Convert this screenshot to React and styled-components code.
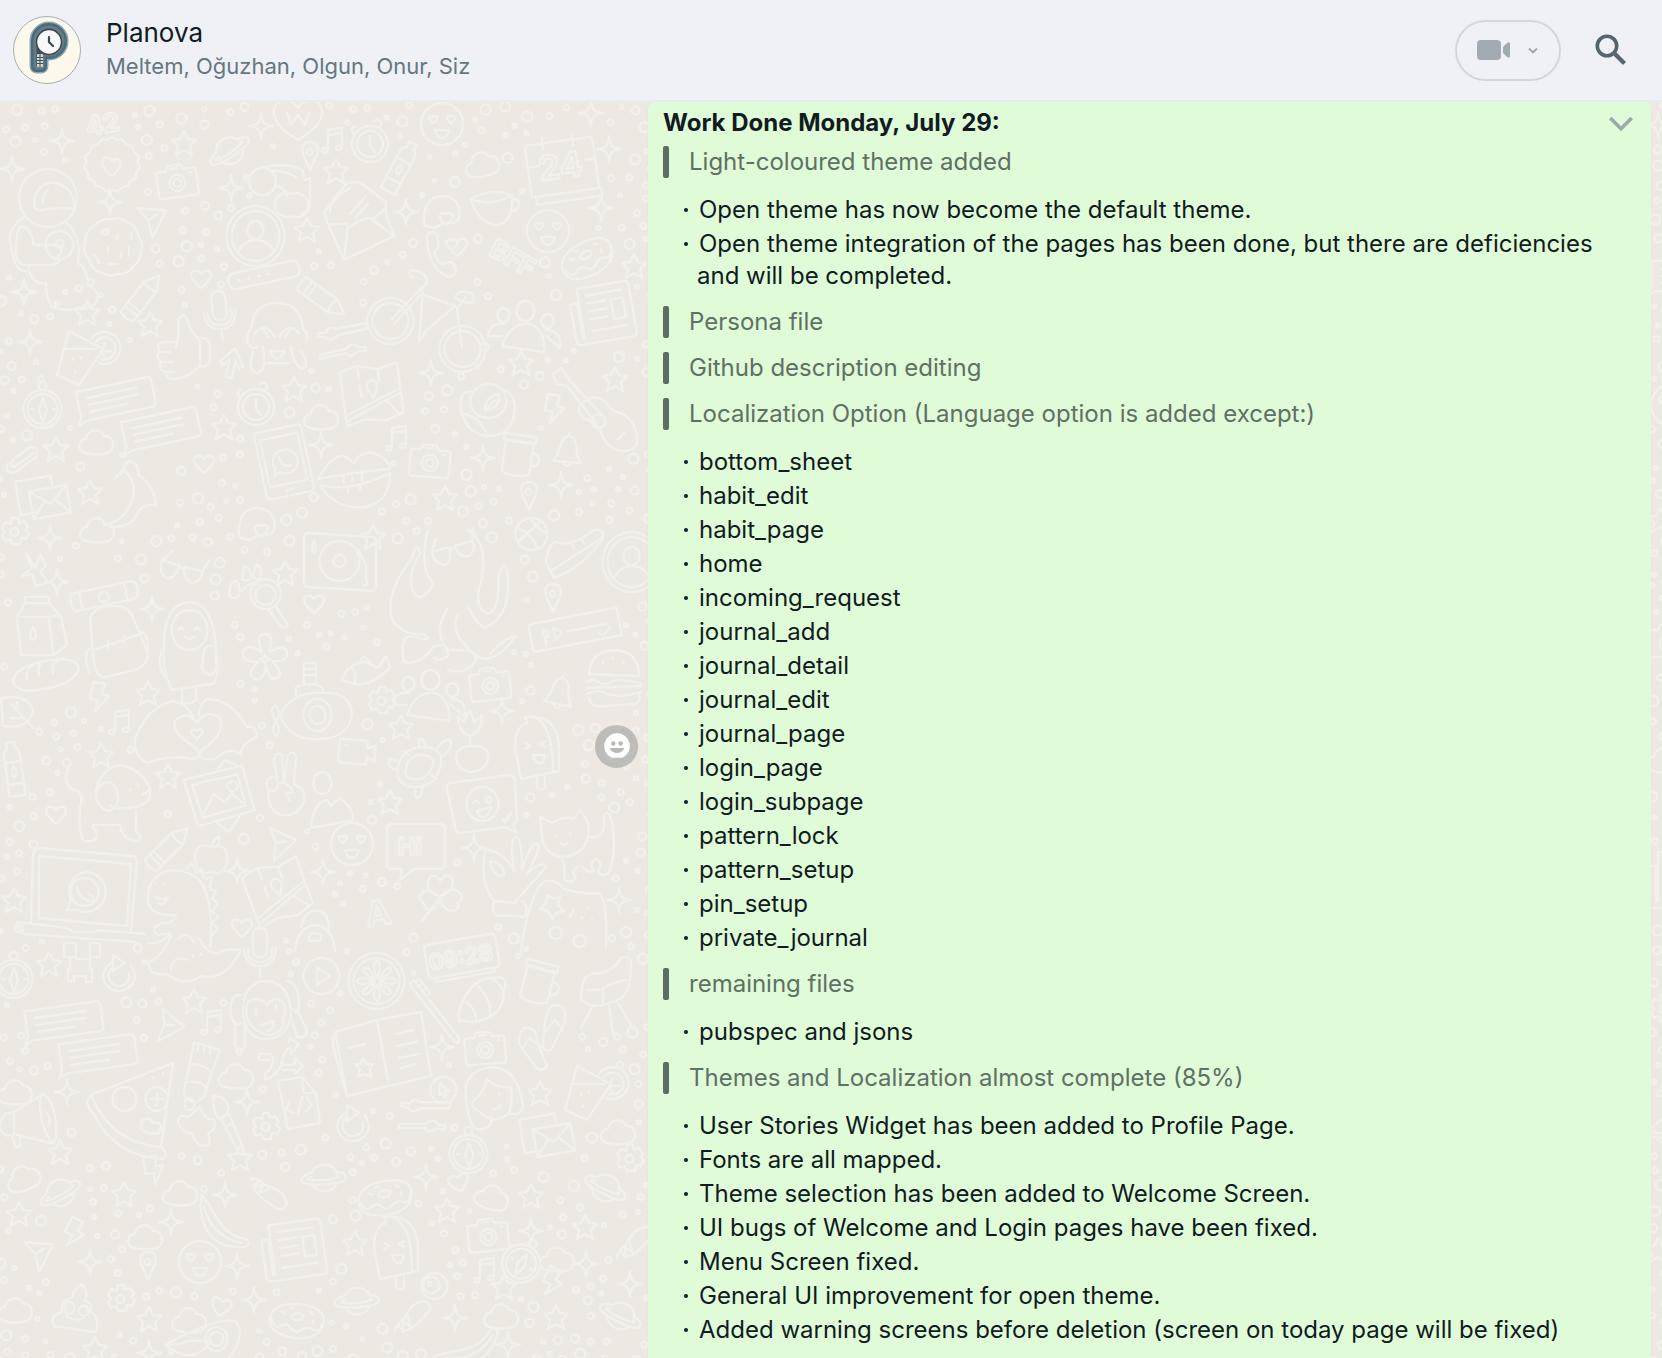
import React from "react";
import styled, { createGlobalStyle } from "styled-components";

const GlobalStyle = createGlobalStyle`
  *, *::before, *::after { box-sizing: border-box; }
  body { margin: 0; font-family: Inter, "Noto Sans", sans-serif; color: #111b21; }
  h1, h2, p, ul, blockquote { margin: 0; padding: 0; }
  button { border: 0; padding: 0; background: none; font: inherit; color: inherit; cursor: pointer; }
`;

const Page = styled.div`
  display: flex;
  flex-direction: column;
  height: 100vh;
  background: #ede8e1;
`;

const Header = styled.header`
  display: flex;
  align-items: center;
  height: 102px;
  flex: none;
  padding: 0 27px 0 13px;
  background: #eff1f6;
  border-bottom: 2px solid #e8ecf0;
`;

const Identity = styled.div`
  display: flex;
  flex-direction: column;
  flex: 1;
  min-width: 0;
  margin-left: 25px;
  padding-bottom: 2px;
`;

const ChatName = styled.h1`
  font-size: 26px;
  line-height: 34px;
  font-weight: 400;
`;

const Members = styled.p`
  font-size: 22px;
  line-height: 32px;
  color: #667781;
  white-space: nowrap;
  overflow: hidden;
  text-overflow: ellipsis;
`;

const CallButton = styled.button`
  display: flex;
  align-items: center;
  justify-content: center;
  width: 106px;
  height: 61px;
  border: 2px solid #d1d7db;
  border-radius: 31px;
`;

const IconButton = styled.button`
  display: flex;
  align-items: center;
  justify-content: center;
  flex: none;
  width: ${(p) => p.$size}px;
  height: ${(p) => p.$size}px;
`;

const SearchButton = styled(IconButton)`
  margin-left: 26px;
`;

const Chat = styled.main`
  flex: 1;
  min-height: 0;
  display: grid;
  grid-template: minmax(0, 1fr) / minmax(0, 1fr);
`;

const Wallpaper = styled.svg`
  grid-area: 1 / 1;
  width: 100%;
  height: 100%;
  overflow: hidden;
  fill: none;
  stroke: #f3efea;
  stroke-width: 2.4;
  stroke-linecap: round;
  stroke-linejoin: round;
`;

const Scroller = styled.div`
  grid-area: 1 / 1;
  overflow-y: auto;
  scrollbar-width: none;
`;

const MessageRow = styled.div`
  display: flex;
  align-items: center;
  justify-content: flex-end;
  gap: 10px;
  padding: 0 11px 24px;
`;

const ReactButton = styled(IconButton)`
  border-radius: 50%;
  background: rgba(134, 138, 138, 0.47);
`;

const Bubble = styled.article`
  flex: 0 1 1003px;
  min-width: 0;
  display: flex;
  align-items: flex-start;
  padding: 5px 16px 44px 15px;
  border-radius: 6px;
  background: #dffbd8;
  box-shadow: 0 1px 1px rgba(11, 20, 26, 0.13);
`;

const Body = styled.div`
  flex: 1;
  min-width: 0;
  display: flex;
  flex-direction: column;
  gap: 14px;
  font-size: 24px;
  line-height: 32px;
`;

const Opening = styled.div`
  display: flex;
  flex-direction: column;
  gap: 7px;
`;

const Title = styled.h2`
  font-size: 24px;
  line-height: 32px;
  font-weight: 700;
`;

const Quote = styled.blockquote`
  display: flex;
  gap: 20px;
  color: #5f7064;

  &::before {
    content: "";
    width: 6px;
    border-radius: 2px;
    background: #5c6d61;
  }
`;

const List = styled.ul`
  list-style: none;
`;

const Item = styled.li`
  display: flex;
  margin-top: 2px;
  padding-left: 21px;

  &::before {
    content: "";
    flex: none;
    width: 4px;
    height: 4px;
    margin: 14px 9px 0 0;
    border-radius: 50%;
    background: #111b21;
  }
`;

const ItemText = styled.span`
  text-indent: 2px;
`;

const MenuButton = styled(IconButton)`
  margin-top: 3px;
`;

const sections = [
  {
    quote: "Light-coloured theme added",
    items: [
      "Open theme has now become the default theme.",
      "Open theme integration of the pages has been done, but there are deficiencies and will be completed.",
    ],
  },
  { quote: "Persona file", items: [] },
  { quote: "Github description editing", items: [] },
  {
    quote: "Localization Option (Language option is added except:)",
    items: [
      "bottom_sheet", "habit_edit", "habit_page", "home", "incoming_request",
      "journal_add", "journal_detail", "journal_edit", "journal_page",
      "login_page", "login_subpage", "pattern_lock", "pattern_setup",
      "pin_setup", "private_journal",
    ],
  },
  { quote: "remaining files", items: ["pubspec and jsons"] },
  {
    quote: "Themes and Localization almost complete (85%)",
    items: [
      "User Stories Widget has been added to Profile Page.",
      "Fonts are all mapped.",
      "Theme selection has been added to Welcome Screen.",
      "UI bugs of Welcome and Login pages have been fixed.",
      "Menu Screen fixed.",
      "General UI improvement for open theme.",
      "Added warning screens before deletion (screen on today page will be fixed)",
    ],
  },
];

/* Doodles of the wallpaper: each is drawn round its own origin; r is the room it takes. */
const HEART = "M0 9C-6 4-10 0-10-4C-10-9-3-10 0-5C3-10 10-9 10-4C10 0 6 4 0 9Z";
const STAR = "M0-12L4-4L12-3L6 3L8 12L0 7L-8 12L-6 3L-12-3L-4-4Z";
const bubbleLines = "M-38-14H34Q38-14 38-10V12Q38 16 34 16H-34L-42 20L-38 12ZM-28-6H22M-28 1H22M-28 8H10";

const doodles = {
  star: { r: 14, d: STAR },
  sparkle: { r: 14, d: "M0-13C1-3 3-1 12 0C3 1 1 3 0 13C-1 3-3 1-12 0C-3-1-1-3 0-13Z" },
  heart: { r: 13, d: HEART },
  cloud: { r: 18, d: "M-11 11C-20 9-18-3-10-3C-9-13 5-15 8-6C18-7 20 7 12 11Q0 14-11 11Z" },
  bigHeart: { r: 28, d: "M0 20C-16 10-24 2-24-8C-24-22-6-23 0-12C6-23 24-22 24-8C24 2 16 10 0 20ZM-11-7L-7 5L0-5L7 5L11-7" },
  face: { r: 24, d: "M0-21A21 21 0 1 1 0 21A21 21 0 1 1 0-21M-9-1C-16-6-12-10-9-7C-6-10-2-6-9-1M9-1C2-6 6-10 9-7C12-10 16-6 9-1M-7 6H7Q5 14 0 14Q-5 14-7 6" },
  planet: { r: 24, d: "M-12-5A14 14 0 0 1 13-4M-12 7A14 14 0 0 0 13 6M-13-4Q-24-1-22 4Q-18 9 2 7Q22 6 22 0Q21-5 13-5M-12 0Q-20 2-14 3Q0 4 12 1Q18-1 13-1" },
  watch: { r: 22, d: "M0-17A18 18 0 1 1 0 19A18 18 0 1 1 0-17M0-12A13 13 0 1 1 0 14A13 13 0 1 1 0-12M0-7V3L5 9M4-22A4 4 0 1 1 4-17M-15-16Q-20-17-17-10" },
  calendar: { r: 42, d: "M-30-26H30Q34-26 34-22V26H-34V-22Q-34-26-30-26M-30 26V34H36V26M-16-32V-20M14-32V-20M-34-4H-22M24-4H34" },
  badge: { r: 32, d: "M0-28Q5-24 10-26Q13-20 20-19Q20-13 27-9Q24-3 28 2Q23 6 24 13Q18 15 16 21Q9 21 6 27Q0 23-6 27Q-9 21-16 21Q-18 15-24 13Q-23 6-28 2Q-24-3-27-9Q-20-13-20-19Q-13-20-10-26Q-5-24 0-28M0 11C-14 1-10-10-4-7L0-4C5-10 16-4 0 11" },
  camera: { r: 24, d: "M-18-10H-10L-8-15H5L8-10H18Q20-10 20-7V14Q20 17 17 17H-17Q-20 17-20 14V-7Q-20-10-18-10M0-5A8 8 0 1 1 0 11A8 8 0 1 1 0-5M0-1A4 4 0 1 1 0 7A4 4 0 1 1 0-1M-5-12H2M13-6H15" },
  astronaut: { r: 62, d: "M0-58A29 29 0 1 1 0 0A29 29 0 1 1 0-58M8-44C-6-46-14-36-14-22Q-13-16-6-17Q8-20 26-18Q28-38 8-44M-5-24Q-5-34 0-37M-24-10Q-38 0-38 10Q-36 36-28 43Q-16 46-20 40M-28 0Q-18-2-14 18H12Q16 24 10 30Q14 36 4 38H-22Q-32 38-32 24Q-32 4-28 0M18-5Q34 10 30 36Q40 42 40 58Q56 66 46 78Q38 84 32 80Q22 86 4 80Q-2 72-2 56Q-16 58-20 40M12 4A14 14 0 1 1 11 4M12 13A4 4 0 1 1 11 13" },
  cookie: { r: 32, d: "M0-28Q6-31 12-26Q24-22 26-10Q31-4 28 4Q28 14 20 20Q14 28 4 27Q-4 31-10 26Q-22 24-24 12Q-31 6-28-4Q-28-16-18-22Q-10-30 0-28M-12-14Q-6-20-4-16Q-6-10-12-14M4-12V-7M-5 0V5M8 5V10M-20 8Q-16 10-14 16M16 0V9M-4 17H4M18-14Q20-10 18-8" },
  shades: { r: 32, d: "M-26-20A13 13 0 1 1-25 7A13 13 0 1 1-26-20M4 6A12 12 0 1 1 3 28A12 12 0 1 1 4 6M-13-2Q-4-2-1 8M-28-20Q0-26 14-18L16-12M-20-18Q4-16 8-10M16-8L22-10V16Q22 24 14 26" },
  openLetter: { r: 46, d: "M-34-10L-12-38Q-2-42 4-38L28-20V-8L36 14L-14 38L-30 2ZM-30 2H-10L-14 38M36 14L12-4Q4-4-10 6M-28-10Q-28-22-8-34M28-14L14-2M-8-8L8-26M-3-4L10-18" },
  bottle: { r: 24, d: "M-8-14Q-8-20-4-22V-28H4V-22Q8-20 8-14V26H-8ZM-8-8H8M-8 14H8M0-4Q5 4 0 7Q-5 4 0-4" },
  cup: { r: 28, d: "M-22-10Q0-20 20-10Q20 14 6 18Q-14 20-22-10Q-2 0 20-10M20-6Q28-6 26 1Q22 8 18 4" },
  locket: { r: 22, d: "M-18 12Q-20-16 0-17Q20-16 17 6Q12 12 0 10Q-6 18-18 12M4 12C-6 5-2-2 4 1C9-3 16 4 4 12" },
  profile: { r: 32, d: "M0-30A29 30 0 1 1-1-30M0-25A24 25 0 1 1-1-25M0-15A8 9 0 1 1-1-15M-18 16Q-12 4 0 4Q12 4 18 16" },
  handset: { r: 24, d: "M-14-20Q-8-26-4-20L-2-8Q-8-4-6 0Q0 12 4 8Q12 4 15 14Q15 21 8 22Q-14 14-14-20M10-6C2-12 6-17 10-14C16-18 20-10 10-6" },
  donut: { r: 28, d: "M-27 4Q-28-14 0-16Q27-16 27-2Q26 16 2 18Q-25 18-27 4M-26 2Q-20 14-14 7Q-8 4-4 10Q2 14 7 8Q14 4 18 8Q25 8 26 0M-6-4Q0-9 6-5Q6 0 0 0Q-6 1-6-4M-16-6L-12-4M12-10L15-8M-8-11H-5M16-2V1" },
  password: { r: 36, d: "M-30-8H30Q36-8 36 0Q36 8 30 8H-30Q-36 8-36 0Q-36-8-30-8M-26 0H-25M-16 0H-15M-6 0H-5M4 0H5" },
  crayon: { r: 28, d: "M-26-8H12L26 0L12 8H-26Q-30 0-26-8M-19-8V8M-14-8V8M12-8Q8 0 12 8" },
  mic: { r: 24, d: "M0-24Q7-24 7-16V-2Q7 5 0 5Q-7 5-7-2V-16Q-7-24 0-24M-12-4Q-13 10 0 10Q13 10 12-4M-16-4Q-15 14 0 14Q15 14 16-4M0 14V25" },
  monkey: { r: 40, d: "M-26-8Q-24-34 0-34Q24-34 26-8M-26-8Q-30-4-30 4Q-26 14-20 10M26-8Q32-4 30 4M-22-4Q-12-16-2 0M22-4Q12-16 2 0M-14-8L-8 0M14-8L8 0M-24 14Q-30 34-20 36Q-10 34-14 10M24 14Q34 30 24 32Q16 26 14 10M-7 14H8Q4 22 0 22Q-4 22-7 14M-10 26H12" },
  bike: { r: 58, d: "M-36-22A23 23 0 1 1-37-22M-36-17A18 18 0 1 1-37-17M36 6A23 23 0 1 1 35 6M36 11A18 18 0 1 1 35 11M-36 0L-4-34M-33 4L-6-26L28-14L0 10L-8 22L-4-28M35 28L30-12L38-22M28-22Q30-30 40-28Q48-28 46-18Q36-16 28-22M-14-42Q-20-46-16-50Q0-48 0-38L-6-30" },
  people: { r: 36, d: "M0-25A9 10 0 1 1-1-25M-22-18A6 7 0 1 1-23-18M22-12A6 7 0 1 1 21-12M-24 20Q-16-4 4-2Q20 4 18 26ZM-24 10H-38Q-36-4-22-2M20 10L34 22Q36 4 20 4" },
  paper: { r: 40, d: "M-22-28H26Q30-28 30-24V24Q30 28 26 28H-26Q-31 28-31 23V-14H-24V22M-22-28V22M-14-20H22M-14-12H4M-14-4H4M-14 4H4M10-12H22V8H10ZM-14 16H22" },
  thumb: { r: 36, d: "M-4 0Q0-18-2-28Q4-38 8-26Q10-16 20-8V18Q10 28 0 30Q-14 34-14 24Q-24 20-18 14Q-26 10-20 4Q-26-6-14-6H-6M22-10Q30-10 30 0V12Q28 20 20 18M-20 4H-10M-18 14H-8M-14 24H-6" },
  cocktail: { r: 34, d: "M-14-24L20-6L-4 30L-26 20ZM-20-6H14M8-16A16 16 0 1 1 16 8M12-12A11 11 0 1 1 18 4M18-4L22-12M18-4L28-4M18-4L22 4M-10 4V5M-2 2V3M-8 16V17" },
  up: { r: 18, d: "M-12 2L0-14L12 2L8 5L3-2V16H-3V-2L-8 5Z" },
  sliders: { r: 28, d: "M-24-10H-16Q-14-18-6-14L24-20V-14L-4-8Q-12 0-16-6H-24ZM-22 12L4 6Q10-2 16 4H24V8H16Q8 16 4 10L-22 16Z" },
  map: { r: 40, d: "M-30-26L-12-30L8-24L28-28V22L10 28L-10 24L-30 28ZM-12-28V-18M-12-10V2M8-22V-12M0-14Q6-12 5-6L0 4L-5-6Q-6-12 0-14M-30 18L28-2M-30 24L12 8L24 24M12 8L28 2" },
  compass: { r: 24, d: "M0-18A19 19 0 1 1-1-18M0-14A15 15 0 1 1-1-14M0-10L4 2L0 14L-4 2ZM0-26A4 4 0 1 1-1-26M-12 1H-10M10 1H12" },
  message: { r: 42, d: bubbleLines },
  phone: { r: 40, d: "M-20-34H20Q24-34 24-30V30Q24 34 20 34H-20Q-24 34-24 30V-30Q-24-34-20-34M-19-26H19V22H-19ZM-4 28H4M0-12A12 12 0 1 1-6 9L-12 12L-10 5A12 12 0 0 1 0-12M-4-6Q-4 4 6 5" },
  lips: { r: 38, d: "M-36 2Q-20-26-8-20L0-14Q6-26 18-24Q34-20 36-8Q10-6-36 2M-34 8Q-4 16 36-4Q36 26 10 30Q-20 32-34 8M-10-2V6M-2-4V4M8-6V4M-6 10V16M6 10V14" },
  rose: { r: 34, d: "M0-24A18 17 0 1 1-1-24M-16-16Q-30-18-28-2Q-26 24-2 28Q26 28 26-2Q24-14 16-18M-28 6Q-10 6-2 28M-4 2Q-4-12 10-14Q12 0-4 2L6-8" },
  guitar: { r: 52, d: "M-44-36L-36-42L-26-28L6 6M-44-36L-40-26L-30-24L-2 12M-14-8Q0-18 10-6Q16 2 26 4Q42 14 40 34Q34 44 20 40Q8 36 4 22Q0 12-14 8Q-22 0-14-8M2 4A7 7 0 1 1 1 4M20 30L28 22" },
  mug: { r: 26, d: "M-14-14H14V18Q0 24-14 18ZM-16-20H16V-13H-16ZM14-4Q22-4 22 3Q21 10 14 9" },
  bell: { r: 22, d: "M-14 12Q-9 6-8-4Q-6-14 0-14Q6-14 8-4Q9 6 14 12ZM-4 13Q0 19 4 13M0-14V-18" },
  letters: { r: 36, d: "M-26-20H10V-10M-10 14H-26V-20M-14-8H24V20H-14ZM-14-8L5 8L24-8M-14 20L0 4M24 20L10 4" },
  clip: { r: 18, d: "M12-8L-8 6Q-14 4-8-2L8-14Q18-14 14-4L-8 12Q-18 12-14 2" },
  bird: { r: 34, d: "M-8-36Q-16-34-14-26Q-4-20-4-4Q-10 24-34 28Q-12 34-2 20Q2 6 18 8Q16-12 0-22Q2-32-8-36M-14-26L-24-18L-10-34" },
  gear: { r: 18, d: "M-3-15H3L4-10L9-12L13-6L10-3L14 0L11 6L6 5L5 11H-3L-5 6L-10 8L-13 2L-10-1L-13-6L-9-11L-4-9ZM0-5A4 4 0 1 1-1-5" },
  turntable: { r: 48, d: "M-32-28L32-24Q36-24 36-20V26Q36 30 32 30L-32 26Q-36 26-36 22V-24Q-36-28-32-28M0-20A20 20 0 1 1-1-20M0-6A6 6 0 1 1-1-6M18-12L26 4V18Q30 24 24 24M-28-14L-26-20L-24-14L-26-8Z" },
  glasses: { r: 28, d: "M-22-4H-4Q-4 10-12 12Q-22 10-22-4M2-4H20Q22 6 12 10Q2 8 2-4M-4-2H2M-22-4L-14-16M20-4L24-16" },
  octopus: { r: 78, d: "M-20-78Q-30-40-14-24Q-30 0-36-20Q-40-36-28-54Q-30-70-36-50Q-64-14-56 12Q-44 28-24 26Q-14 34-30 30Q-50 22-44 54Q-28 58-14 38Q0 34 0 48Q-8 54-14 50M20-78Q40-66 34-30Q24 0 40 6Q52 2 50-30Q58-56 60-28Q62 10 36 20Q24 10 20-2M0 0Q-16 24 0 42Q30 40 28 52Q18 68 0 62M10 6Q2 24 20 40Q40 66 68 28Q56 30 42 46" },
  ball: { r: 18, d: "M0-16A16 16 0 1 1-1-16M-14-6Q0 0 6 15M-2-16Q6-4 16 0M-14 8Q-4-2 10-13" },
  shoe: { r: 34, d: "M-28 6Q-26-12-18-14Q-4-8 20-26Q32-28 28-16Q8 12-20 22ZM-22 14L28-18M-2-12L0-8M8-16L10-12" },
  hourglass: { r: 20, d: "M-10-16L0-2L4-16L10-4L4 2L12 12L0 16L-4 4L-14 6L-4-2Z" },
  thermos: { r: 34, d: "M-32-8H28Q34-8 34 0Q34 10 28 10H-32Q-36 0-32-8M-24-8V10M22-8V10M0-3A5 5 0 1 1-1-3" },
  milk: { r: 34, d: "M-24-10L-16-24H8L20-10L26 18L12 28H-20ZM-24-10H8L12 28M8-10L20-12M-16-24V-30H8V-24M-8 0Q-2 10-8 13Q-14 10-8 0" },
  backpack: { r: 38, d: "M-24-24Q-18-36 0-34Q16-34 20-18L30 14Q32 28 14 32L-14 36Q-22 36-24 20ZM-24 8L26-4M-26 6Q-34 8-30 30M26-6Q34-2 30 14M-8 0V8M8-4V4" },
  penguin: { r: 48, d: "M-26 0Q-28-46 0-48Q24-46 26 0Q30 30 22 34L-18 40Q-28 20-26 0M0-40A18 20 0 1 1-1-40M-12-20Q-8-24-6-20M4-20Q8-24 10-20M-6-14Q0-8 5-14M14 0Q20-8 26-2V20Q18 30 12 18ZM-8 40V52Q0 56 6 50V38M-28 0Q-34 20-22 30" },
  paw: { r: 36, d: "M-28-10Q-22-16-20-2Q-22 8-30 4Q-32-4-28-10M-16-26Q-10-28-9-16Q-12-10-18-14ZM-4-28Q4-26 0-14Q-6-12-7-18ZM-18-2Q-10-14 0-8M6-14A15 15 0 1 1 5-14M6-8A10 10 0 1 1 5-8M16 14L28 32Q24 38 20 32L8 16" },
  flower: { r: 26, d: "M-3-6Q-10-24 0-24Q10-24 4-6Q22-16 22-4Q22 4 7 3Q20 16 12 20Q4 24 1 8Q-2 26-12 20Q-18 14-7 4Q-24 4-22-6Q-18-16-3-6M0-4L2 0L5 1L1 3L0 6L-2 3L-5 1L-1 0Z" },
  fish: { r: 26, d: "M-24 8Q-18-10 0-10L12-4L20-16L24-4L14 4Q-2 18-24 8M-14-4Q-8 2-12 12M-8-8L-2-16L4-10" },
  submarine: { r: 50, d: "M-34 10Q-22-14 8-12Q36-14 38 8Q36 34 4 34Q-24 36-34 10M-18-6V-18Q8-26 10-12M-10-20V-42H2V-22M-10-36H2M-10-30H2M4-6A14 16 0 1 1 3-6M4 1A8 9 0 1 1 3 1M-38 0Q-32 10-38 16Q-44 26-38 32Q-32 26-38 16Q-46 4-38 0" },
  voice: { r: 46, d: "M-40-14H46V14H-40Q-44 14-44 10V-10Q-44-14-40-14M-30-6Q-26-6-26 2Q-34 2-30-6M-30 2V9M-20-6L-12 0L-20 6ZM-6 0H32M24 8L28 11L36 4" },
  burger: { r: 32, d: "M-24-4Q-22-28 2-28Q26-26 26-2ZM-26 4Q-20 0-14 4Q-6 8 0 3Q12 0 28 6M-26 10L28 8M-26 16Q-14 10-6 16Q8 20 28 14M-24 20Q-22 30-10 28L22 26Q28 24 26 16M-10-16V-15M0-20V-19M10-16V-15" },
  bread: { r: 36, d: "M-32 6Q-30-8 0-14Q32-20 34-6Q28 10-2 14Q-28 20-32 6M-18 4Q-20-6-12-10M-6 0Q-8-12 0-14M8-2Q6-12 12-14" },
  bolt: { r: 18, d: "M-6-15L6-13L3-3L10-1L-4 14L-1 3L-9 1Z" },
  leaf: { r: 20, d: "M-16-14Q14-18 16 0Q10 18-14 14ZM16 16L-6-8M0-2V-10M6 6H-6" },
  note: { r: 15, d: "M-5 9V-10L9-12V6M-5-5L9-7M-5 9Q-11 6-11 11Q-6 15-5 9M9 6Q3 4 3 9Q8 12 9 6" },
  hands: { r: 62, d: "M-8 8Q-26-4-22-14Q-10-26 0-12Q8-26 22-18Q30-2 6 14M-8 8Q10 20-4 24Q-30 20-50 28Q-64 20-62 4Q-50-28-24-34Q-8-30-4-18M6 14Q-4 26 18 24Q34 10 44 20Q44 8 60 2Q60-10 50-8Q34-36 10-36Q2-30 2-20M0 4C-10-4-4-8 0-4C4-8 10-4 0 4" },
  tulip: { r: 34, d: "M-12-24Q-12-8 0-4Q12-8 12-24L4-18L0-30L-6-18ZM0-4V6M0 6Q20 4 18 20Q14 32 0 32Q-14 30-14 16Q-12 6 0 6" },
  turtle: { r: 40, d: "M-22 8Q-20-16 2-18Q24-18 22-2Q18 22-4 22Q-20 22-22 8M-14 8Q-12-10 2-10Q16-10 14 0Q8 16-4 14Q-12 14-14 8M18-16Q26-28 32-24Q34-16 22-8M-22-4L-30-6Q-32 4-22 4M-4 22V32Q2 36 4 20M0-18V-26Q6-28 6-17M-10-10L-16-14M12 10L18 14" },
  popsicle: { r: 40, d: "M-22-6Q-22-24-12-30Q-8-26-12-36Q20-40 22-6V18L-16 26ZM-4-36Q16-30 16 18M0 24V34Q4 40 8 34V22M-12-10L-6-7L-12-4M8-12L3-9L8-6M-4 2H8Q6 12 2 10Q-2 10-4 2" },
  video: { r: 22, d: "M-16-12H8Q10-12 10-9V-4L18-8V8L10 4V9Q10 12 8 12H-14Q-18 12-18 9V-9Q-18-12-16-12M-12-6H-10" },
  peace: { r: 34, d: "M-6 2L-10-24Q-8-32-2-28L0 0L4-28Q10-34 12-26L10 2Q22 4 20 18Q14 34-2 32Q-16 30-16 6Q-20-6-10-6M-6 2Q-2-4 6 4Q12 10 2 10L6 18M-16 6Q-8 12-6 2" },
  picture: { r: 40, d: "M-34-20L26-26L32 20L-26 28ZM-26-14L20-18L24 14L-20 20ZM-20 18L-6-2L4 8L12 0L24 14M14-12A5 5 0 1 1 13-12M0-24L10-34L22-26M-6 28L4 38L18 22" },
  dog: { r: 48, d: "M-42-36Q-48-14-32-12Q-26-6-30 4Q-32 30-26 38Q-10 40-14 28Q-22 20-12 22H10Q12 38 28 38Q34 34 26 28V8M-14-12Q-10-34 10-38Q32-34 40-14Q42 2 24 4Q6 8 0 2M-14-12Q-4-26 4-18Q14 0 0 8Q-14 6-14-12M20-14V-13M28-18V-17M32-8L38-12" },
  person: { r: 30, d: "M-8-28A9 11 0 1 1-9-28M-20 28Q-18 2-4 0L0 6L8-2Q22 6 22 20Z" },
  reply: { r: 40, d: "M-32-22L26-30Q32-30 32-24L34 16L30 20L34 28L22 22L-22 28Q-28 28-28 22L-36-16Q-36-22-32-22M0-18A16 17 0 1 1-1-18M-10-2Q-7-6-4-2M6-8A3 3 0 1 1 5-8M-6 6L8 2Q6 12 0 12Q-4 12-6 6M20 14L22 17L28 8" },
  cat: { r: 46, d: "M-34-6L-36-26L-24-20Q-10-28-2-24L4-34L12-20Q14-6 8 4Q0 14-16 14Q-32 10-34-6M-14 14Q-10 26-12 36Q-4 42 0 34Q-6 28 2 24M12-6Q30-4 28-22Q28-34 34-28Q42 0 34 28Q26 36 22 28Q28 20 20 16Q12 20 18 28Q10 30 6 24M-20-8V-7M-6-10V-9M-16 0L-12 2L-8-1" },
  apple: { r: 22, d: "M0-10Q-16-16-16 2Q-14 18-4 16Q0 14 6 17Q18 12 16-2Q14-14 0-10Q2-18 8-20Q10-14 4-10" },
  send: { r: 22, d: "M-12-16L14-4L-8 17L-6-1ZM-6-1L4-3" },
  hiBubble: { r: 38, d: "M-24-23H24Q29-23 29-18V16Q29 22 24 22H-2L-16 33L-14 22H-24Q-29 22-29 17V-18Q-29-23-24-23" },
  laptop: { r: 66, d: "M-46-42L46-34Q52-34 52-28L46 42M-46-42Q-52-40-52-34L-54 32M-46-34L46-26L42 36L-46 28ZM-68 32L-18 38L-12 42H10L14 40L60 44M-68 32Q-64 44-60 44L50 52M0-18A20 20 0 1 1-8 20L-18 20L-14 10A20 20 0 0 1 0-18M0-12A14 14 0 1 1-1-12M-8-4Q-8 8 8 12Q10 6 4 4" },
  dino: { r: 52, d: "M-34 0Q-36-24-16-32Q10-36 22-16Q32 10 28 44M-34 0Q-28 14-6 12Q-10 22-20 20Q-34 26-24 32L-12 30Q-20 42-34 40M-4 36Q6 26 12 40M-26-20V-19M-18-20V-19M-26-6Q-20-2-14-6Q-18 4-24 0M4-34L10-40L14-30L20-34L22-24L30-26L28-14L34-12L30-4L36 0L30 8L36 14L30 20L36 26L30 32" },
  clover: { r: 32, d: "M0 0Q-18-8-10-20Q-4-24 0-16Q6-26 12-18Q16-8 0 0Q14-12 20-4Q24 2 18 6Q20 14 10 14Q2 12 0 0Q-14-10-18-4Q-24 2-16 6Q-16 14-6 12Q0 8 0 0L-18 24" },
  plant: { r: 48, d: "M-24-28Q-32 4-16 24L4 26Q20 8 36-10Q32-18 16-2Q34-32 26-34Q20-32 12-8Q12-44 4-40Q0-30 4-6Q-4-24-24-28M-20-16Q-16 2-6-2Q-6-14-20-16M-16 24Q-20 42-6 38L14 40Q20 30 12 24" },
  gamepad: { r: 46, d: "M-44 40Q-34-30-18-36Q-8-38 0-28Q20-22 34-24Q44-20 42 30M-16-22L-10-18L-4-20L-6-12L0-6L-8-4L-12 2L-16-6L-24-8L-18-14ZM-8 10A6 6 0 1 1-9 10M16 18A6 6 0 1 1 15 18M24-10V-9M18 0V1M28 2V3M10-8L6 0" },
  bag: { r: 28, d: "M-20 24Q-18 0 0-2Q18 0 20 24M-14 0Q-10-18 4-16Q14-14 14 2M-6 8Q0 4 6 8V14H-6Z" },
  reload: { r: 20, d: "M-6-13Q-18-6-15 6Q-10 17 2 16Q16 12 16 0L12-10M-6-8Q-12-4-10 4Q-6 12 2 11Q12 8 10-2M-6-20L6-12L-6-4Z" },
  pixel: { r: 24, d: "M-16-22H-4V-8H-16ZM10-22H20V-8H10ZM-10-8V4H-12V16H-6V11H6V17H12V4H10V-6H-4" },
  narwhal: { r: 46, d: "M-24-22Q-34 0-46 4Q-48 18-28 16Q-10 30 6 18Q30 24 46-8Q28-10 22-4Q10-6 4-20M-24 12Q-22-4-8 2M-2-2V-1M6-4V-3" },
  play: { r: 20, d: "M0-18A18 18 0 1 1-1-18M-5-9L8 0L-5 9Z" },
  orange: { r: 30, d: "M0-28A28 28 0 1 1-1-28M0-23A23 23 0 1 1-1-23M0-3Q-6-18 0-20Q6-18 0-3M2-2Q10-16 14-13Q16-8 2-2M3 0Q18-6 19 0Q18 6 3 0M2 2Q16 8 13 13Q8 16 2 2M0 4Q6 16 0 20Q-6 16 0 4M-2 2Q-8 16-14 13Q-16 8-2 2M-3 0Q-18 6-20 0Q-18-6-3 0M-2-2Q-16-8-13-13Q-8-16-2-2" },
  alarm: { r: 40, d: "M-32-18H32Q36-18 36-14V12Q36 16 32 16H-32Q-36 16-36 12V-14Q-36-18-32-18M-30 16V20H30V16" },
  brush: { r: 36, d: "M-38-3H36Q40 0 36 3H-38ZM-36-3V-8H-18V-3M-30-8V-3M-24-8V-3" },
  croissant: { r: 32, d: "M-22 20Q-28 26-24 8Q-14-20 6-22Q26-26 20-10Q20 14-2 20Q-14 24-22 20M-18 2Q-8 8-8 20M-6-14Q8 0 6 16M8-22Q20-14 20-4" },
  grill: { r: 42, d: "M-26 10Q-26-16-14-16Q4-16 14-32Q26-36 24-22Q24 8 6 12Q-14 20-26 10M-4 14V-2Q6-8 20-10M-20 0H-4M-14 16L-26 38M2 16L6 44M12 14L24 36" },
  ape: { r: 40, d: "M-24 0Q-24-32 0-32Q24-30 24 4Q18 26 0 26Q-22 26-24 0M-20 4Q-24-14-10-14Q-4-14 0-8Q4-14 10-14Q22-10 16 6Q18 20 2 22Q-14 20-20 4M-11-4V1M9-8V-3M-6 12L7 8Q6 18 0 18M-26-18Q-38-20-36 4Q-32 14-26 10M-32 12V32Q-28 42-22 34V10M20-32Q32-30 32-8Q32 6 26-4M30-4L40 18Q38 26 30 24L24 4" },
  pizza: { r: 60, d: "M38-44L-44-12Q-24 36 26 40ZM-44-12Q-52-4-42 6Q-20 50 28 52Q34 46 26 40M-10-20A12 12 0 1 1-11-20M22-20A11 12 0 1 1 21-20M16-8H28M22-14V-2M6 14Q14 8 18 16Q30 14 24 26Q12 28 6 22ZM18-30V-29M28-34V-33" },
  sock: { r: 38, d: "M-8-30L18-22L2 24Q-6 34-16 26Q-20 20-16 10ZM-12-8Q4-8 10 2M-16 10Q0 8 4 16M-12 26A5 6 0 1 1-13 26M-4-28V-22M2-26V-20M8-24V-18" },
  paintbrush: { r: 40, d: "M-16-26Q-2-26 0-12Q-6-4-10-4Q-16-8-16-26M-8-4L0-8L14 26Q16 34 10 32ZM-4 6L2 2" },
  shuffle: { r: 28, d: "M-22-6H-10Q-4 4-16 14V20Q0 14 2-2Q4-12 10-12V-6L18-16L8-22V-18M0 4Q10 6 14 4V-2L22 6L14 14V10H2M-22-6Q-24-2-20 0H-12" },
  book: { r: 56, d: "M-48-20L-6-32L38-40L48 24L6 34L-36 44ZM-6-32L6 34M-50-16Q-52-8-36 44M-34-4L-18-8M14-18L30-22M14-6L34-10M16 6L36 2M18 16L32 12M-20 6L-16 12L-10 12L-13 18L-12 25L-18 22L-25 24L-23 17L-28 12L-22 12Z" },
  flops: { r: 34, d: "M10-30Q24-34 22-14L8 14Q0 16 0 8Q2-30 10-30M2-4L12-16L20-6M-18-8Q-6-10-6 6L4 30Q-2 38-8 30L-24 8Q-24-6-18-8M-20 12L-14 2L0 12" },
  cursor: { r: 15, d: "M0-13A13 13 0 1 1-1-13M-4-7L5 1L0 1L3 6L0 7L-3 3L-5 5Z" },
  girl: { r: 40, d: "M-26 10Q-34-28 0-30Q26-28 30 10Q26 20 16 16M-26 10Q-22 36-10 32Q0 30-2 20M-6-18Q-10-2-20 4Q-22 12-14 14Q0 30 16 16Q20 6 18-10Q4-8-6-18M-8-2V-1M6-4V-3M0 12Q6 12 8 8" },
  doc: { r: 32, d: "M-20-22L4-26L18-10L22 20L-10 26ZM4-26L6-10L18-10M-8-2L-12 6L-4 10M8-6L14 2L8 8M4-6L0 12" },
  puzzle: { r: 26, d: "M-18-2Q-18-12-8-8L4-18Q8-4 18-6Q22 4 12 8Q18 24 4 20Q-2 16-4 8Q-14 8-18-2" },
  megaphone: { r: 38, d: "M-22-6Q-32 4-26 12Q-22 18-14 14L26 24M-22-6L-14-8L12-24M-14-8V14M14-26Q24-24 28 2Q30 22 24 22Q12 8 12-20ZM-16 16L-12 28L-8 26V16M18-8Q24-2 20 6" },
  banana: { r: 34, d: "M-22-28Q-14-18-8-6Q4 14 22 16Q28 22 20 24Q-6 26-18 6Q-26-10-22-28M-20-16Q-12 14 18 20" },
  pin: { r: 18, d: "M0 14L-7-2Q-10-14 0-14Q10-14 7-2ZM0-7A3 3 0 1 1-1-7" },
  poop: { r: 32, d: "M-22 16Q-28 6-14 2Q-16-10-4-12Q-4-20 6-26Q14-14 8-10Q18-6 14 2Q24 6 20 22Q4 20-22 16M-6-8A5 6 0 1 1-7-8M8-4A5 5 0 1 1 7-4M-10 6Q0 12 8 8" },
  hotdog: { r: 24, d: "M-18-14Q-12-16-4-8Q16-2 18 10Q14 20 6 14Q-14 2-14-4M-10-12L-16-6L-6-8L-10 0L0-4" },
  eye: { r: 16, d: "M0-14A13 13 0 1 1-1-14M-3-10A8 8 0 1 1-4-10M-5-5A2 2 0 1 1-6-5" },
  avocado: { r: 40, d: "M-50 8Q0-20 20-16Q34 0 8 28M-50 8Q-34 8-26 4H-4Q-20 26-40 14ZM2-10A11 12 0 1 1 1-10M2-5A7 7 0 1 1 1-5" },
};

const placed = [
  ["bigHeart",298,120],["face",442,124],["planet",229,150,-30],["watch",370,143],["calendar",562,167,-8],
  ["badge",112,165],["camera",177,180,-8],["astronaut",48,227],["cookie",113,247],["shades",288,188],
  ["openLetter",358,222],["bottle",400,168,28],["cloud",482,164,-12],["cup",493,207,-5],["locket",442,213],
  ["face",548,231],["profile",256,236],["handset",441,255],["donut",587,258,-25],["password",264,275,-12],
  ["crayon",143,296,-52],["crayon",323,299,36],["mic",220,315,-6],["monkey",277,337],["bike",427,320],
  ["people",526,326],["paper",603,313,-10],["thumb",180,348],["cocktail",83,355],["up",232,362,12],
  ["sliders",342,343],["map",373,394,-8],["compass",43,408],["message",116,398,-12],["message",161,428,-12],
  ["watch",256,406],["phone",284,462,-12],["lips",354,477],["camera",430,460,5],["rose",489,408],
  ["guitar",597,410],["mug",518,455,8],["bell",568,450,5],["cloud",321,417],["cloud",96,442],
  ["letters",44,497,-10],["clip",22,461],["bird",138,497],["send",154,219,-20],
  ["note",333,140],["note",397,438],["pin",310,156],["bolt",554,409],["pin",529,496],
  ["star",184,143],["star",336,171],["star",307,230],["star",634,266],["star",87,313],["star",150,324],
  ["star",294,389],["star",521,363],["star",615,379],["star",224,427],["star",56,449],["star",90,492],["star",445,498],
  ["sparkle",62,141],["sparkle",12,169],["sparkle",110,202],["sparkle",231,188],["sparkle",261,126],["sparkle",406,212],
  ["sparkle",591,113],["sparkle",609,149],["sparkle",601,208],["sparkle",24,292],["sparkle",431,373],["sparkle",321,445],
  ["sparkle",483,458],["sparkle",561,485],["sparkle",30,342],["heart",201,279],["heart",204,464],["heart",457,247],
  ["gear",15,533],["sparkle",50,538],["locket",257,525],["turntable",340,561],["star",373,537],["glasses",454,550,-15],
  ["octopus",448,608],["ball",532,534],["shoe",574,556],["profile",632,562],["hourglass",36,570],["sparkle",57,582],
  ["thermos",104,595,-12],["milk",41,627],["backpack",116,640,-5],["penguin",190,650],["glasses",182,570,15],
  ["paw",260,593],["star",285,573],["heart",314,604],["flower",265,658],["fish",366,672],["submarine",314,705],
  ["gear",382,702],["people",431,695],["camera",490,683,-6],["voice",574,630,-11],["burger",613,678],["bell",560,692,12],
  ["bread",45,675],["bolt",99,697],["star",148,693],["leaf",17,712],["note",120,722],["hands",197,735],
  ["star",101,755],["sparkle",502,711],["tulip",470,740],["turtle",419,765],["popsicle",537,753],["star",401,727],
  ["video",357,752,5],["peace",284,783],["picture",220,795,-8],["dog",110,803],["star",168,776],["heart",56,815],
  ["bottle",14,770,-8],["person",331,800],["star",390,802],["reply",483,805],["cat",576,843],["crayon",169,847,-45],
  ["apple",211,857],["send",282,844],["face",352,844],["hiBubble",416,847],["laptop",85,890],["dino",182,903],
  ["map",279,892,-20],["clover",440,897],["plant",510,877],["gamepad",564,917],["sparkle",474,848],["sparkle",237,871],
  ["sparkle",323,872],["sparkle",619,900],["sparkle",152,609],["heart",242,928],["bag",315,927],["star",14,900],
  ["pin",553,598],["cloud",97,530],
  ["compass",14,978],["star",49,964],["reload",119,975],["pixel",80,965],["narwhal",195,958],["mic",260,952],
  ["play",322,976],["orange",377,981],["alarm",462,957,-10],["brush",435,1012,52],["croissant",484,1000],["mug",538,982,15],
  ["grill",607,990],["ape",267,1013],["message",64,1020,-8],["message",98,1053,-8],["star",194,1001],["send",170,1027,15],
  ["note",212,1022],["pizza",135,1107],["sock",202,1072],["cloud",236,1076],["paintbrush",229,1122],["shuffle",281,1060],
  ["book",383,1052],["sparkle",442,1047],["camera",485,1047,-5],["flops",543,1036],["cursor",444,1090],["girl",493,1097],
  ["star",540,1093],["cocktail",591,1090],["letters",548,1135,-10],["cloud",618,1132],["gear",630,1160],["compass",469,1153],
  ["sliders",423,1117,12],["reload",353,1125],["doc",298,1103],["gear",266,1128],["sparkle",247,1102],["puzzle",196,1125],
  ["megaphone",28,1120],["cloud",15,1092],["sparkle",67,1092],["star",60,1152],["star",240,1158],["bolt",154,1170,-20],
  ["planet",60,1192,-25],["planet",324,1177],["planet",606,1187,30],["planet",357,1300],["planet",621,1315,30],
  ["cloud",180,1193],["cloud",23,1178,-20],["cloud",145,1237],["cloud",492,1197,15],["cloud",557,1259],["cloud",15,1310],
  ["cloud",501,1316],["cloud",189,1320],["star",124,1194],["star",19,1214],["star",447,1210],["star",531,1196],
  ["star",355,1243],["star",585,1227],["star",504,1287],["star",556,1317],["star",149,1319],["star",95,1349],
  ["sparkle",225,1195],["sparkle",426,1177],["sparkle",171,1222],["sparkle",90,1262],["sparkle",237,1266],
  ["sparkle",254,1300],["sparkle",531,1231],["sparkle",586,1264],["sparkle",630,1284],["sparkle",455,1318],
  ["sparkle",508,1345],["sparkle",149,1353],["banana",224,1223],["banana",468,1345,-70],["donut",385,1197,-8],
  ["donut",297,1320,8],["paper",294,1250,-8],["face",200,1262],["popsicle",396,1253],["camera",488,1234,-6],
  ["compass",522,1263,30],["note",485,1270],["bolt",74,1233,15],["bolt",552,1282,15],["send",41,1253,-20],["pin",148,1266],
  ["poop",76,1310],["gear",121,1300],["heart",459,1183,-15],["heart",221,1307,15],["hotdog",269,1193],["hotdog",412,1317,-80],
  ["eye",435,1287],["avocado",215,1337],["hotdog",634,1243,-80],
  ["sparkle",1658,125],["message",1690,275],["face",1672,405],["star",1660,520],["camera",1668,640],["cloud",1664,760],
  ["paper",1680,880],["gear",1664,1010],["planet",1668,1130],["star",1658,1250],
];

const scribbles = [
  ["42", 104, 133, -10, 26],
  ["24", 562, 178, -8, 34],
  ["BFF", 508, 266, 30, 26],
  ["Hi", 410, 855, 0, 24],
  ["09:28", 462, 965, -10, 22],
  ["A", 380, 925, -10, 34],
];

/* Small rings scattered over whatever room the doodles leave, the same on every load. */
const rings = (() => {
  const taken = placed
    .map(([kind, x, y]) => ({ x, y, r: doodles[kind].r * 0.92 }))
    .concat(scribbles.map(([, x, y]) => ({ x, y: y - 8, r: 26 })));
  const out = [];
  let seed = 7;
  const next = () => {
    seed = (seed * 16807) % 2147483647;
    return seed / 2147483647;
  };
  for (let i = 0; i < 12000; i += 1) {
    const x = i % 25 === 0 ? 1652 + next() * 12 : next() * 650;
    const y = 104 + next() * 1256;
    const r = [2, 3, 3, 4, 5][Math.floor(next() * 5)];
    if (taken.every((t) => Math.hypot(t.x - x, t.y - y) > t.r + r + 4)) {
      taken.push({ x, y, r: r + 3 });
      out.push({ x, y, r });
    }
  }
  return out;
})();

function ChatWallpaper() {
  return (
    <Wallpaper aria-hidden="true">
      <g transform="translate(0 -102)">
        {placed.map(([kind, x, y, turn = 0], i) => (
          <path key={i} d={doodles[kind].d} transform={`translate(${x} ${y}) rotate(${turn})`} />
        ))}
        {scribbles.map(([word, x, y, turn, size]) => (
          <text
            key={word}
            transform={`translate(${x} ${y}) rotate(${turn})`}
            textAnchor="middle"
            fontSize={size}
            fontWeight="700"
          >
            {word}
          </text>
        ))}
        {rings.map((c, i) => (
          <circle key={i} cx={c.x} cy={c.y} r={c.r} />
        ))}
      </g>
    </Wallpaper>
  );
}

const LOGO_STEM = "M35 66V41A14 14 0 1 1 49 55H43V66Q43 68 41 68H37Q35 68 35 66Z";

function Avatar() {
  return (
    <svg width="68" height="68" viewBox="13 16 68 68" role="img" aria-label="Planova" fill="none">
      <circle cx="47" cy="50" r="33.5" fill="#fcf9ec" stroke="#a9aeae" />
      <path d={LOGO_STEM} stroke="#8ba6b0" strokeWidth="11" />
      <path d={LOGO_STEM} stroke="#4b6b79" strokeWidth="8" />
      <path d={LOGO_STEM} fill="#3f5058" stroke="#667c86" strokeWidth="3" />
      <circle cx="49" cy="42" r="12.5" fill="#f8f9fb" stroke="#3c474d" strokeWidth="1.5" />
      <path d="M49 37V42L53 46" stroke="#3d474c" strokeWidth="2.2" strokeLinecap="round" />
      <rect x="37" y="54" width="6" height="13" rx="1" fill="#d2d9da" />
      <path d="M40 54V67M37 57.5H43M37 60.5H43M37 63.5H43" stroke="#3f5058" strokeWidth="1" />
    </svg>
  );
}

export default function App() {
  return (
    <Page>
      <GlobalStyle />
      <Header>
        <Avatar />
        <Identity>
          <ChatName>Planova</ChatName>
          <Members>Meltem, Oğuzhan, Olgun, Onur, Siz</Members>
        </Identity>
        <CallButton type="button" aria-label="Video call">
          <svg width="62" height="22" viewBox="0 0 62 22">
            <rect x="0" y="1" width="24" height="20" rx="4" fill="#a2aab2" />
            <path d="M26 8L30 4Q33 2 33 5V17Q33 20 30 18L26 14Z" fill="#a2aab2" />
            <path d="M52 9.5L56 13.5L60 9.5" fill="none" stroke="#9aa3ab" strokeWidth="1.8" />
          </svg>
        </CallButton>
        <SearchButton type="button" aria-label="Search" $size={48}>
          <svg width="32" height="32" viewBox="0 0 32 32" fill="none" stroke="#54656f">
            <circle cx="12" cy="12" r="9.7" strokeWidth="3.6" />
            <path d="M20 20L29.5 29.5" strokeWidth="4.2" />
          </svg>
        </SearchButton>
      </Header>
      <Chat>
        <ChatWallpaper />
        <Scroller>
          <MessageRow>
            <ReactButton type="button" aria-label="React" $size={43}>
              <svg width="26" height="26" viewBox="0 0 26 26">
                <path d="M13 0A13 13 0 0 1 18.5 24.7H7.5A13 13 0 0 1 13 0Z" fill="#fff" />
                <circle cx="9.3" cy="10.5" r="2.2" fill="#b9b8b5" />
                <circle cx="16.7" cy="10.5" r="2.2" fill="#b9b8b5" />
                <path d="M5.5 15H20.5Q18 20 13 20T5.5 15Z" fill="#b9b8b5" />
              </svg>
            </ReactButton>
            <Bubble>
              <Body>
                {sections.map((section, i) => (
                  <React.Fragment key={section.quote}>
                    {i === 0 ? (
                      <Opening>
                        <Title>Work Done Monday, July 29:</Title>
                        <Quote>{section.quote}</Quote>
                      </Opening>
                    ) : (
                      <Quote>{section.quote}</Quote>
                    )}
                    {section.items.length > 0 && (
                      <List>
                        {section.items.map((item) => (
                          <Item key={item}>
                            <ItemText>{item}</ItemText>
                          </Item>
                        ))}
                      </List>
                    )}
                  </React.Fragment>
                ))}
              </Body>
              <MenuButton type="button" aria-label="Message menu" $size={28}>
                <svg width="24" height="16" viewBox="0 0 24 16" fill="none" stroke="#9ba9a8" strokeWidth="3.6">
                  <path d="M1.3 2L12 12.7L22.7 2" />
                </svg>
              </MenuButton>
            </Bubble>
          </MessageRow>
        </Scroller>
      </Chat>
    </Page>
  );
}
